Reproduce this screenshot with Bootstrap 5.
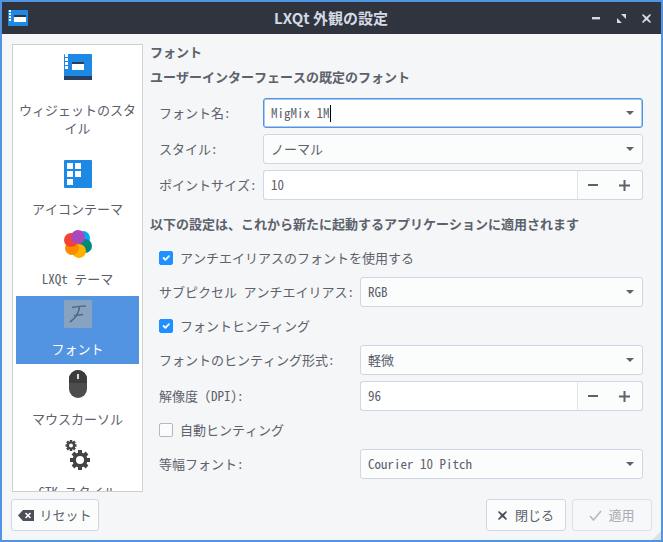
<!DOCTYPE html>
<html lang="ja"><head><meta charset="utf-8"><title>LXQt 外観の設定</title>
<link href="https://cdn.jsdelivr.net/npm/bootstrap@5.3.0/dist/css/bootstrap.min.css" rel="stylesheet">
<style>
html,body{margin:0;height:542px;overflow:hidden}
body{font:13px/18px "Noto Sans Mono CJK JP","Noto Sans CJK JP",monospace;color:#5c616c;background:#f5f6f7}
.win{width:663px;height:542px;border:2px solid #5294e2;background:#f5f6f7;position:relative}
.titlebar{height:32px;background:#2f343f;color:#d3dae3;font:bold 15px/32px "Noto Sans CJK JP",sans-serif;padding:0 10px 0 6px}
.titletext{flex:1;text-align:center;margin-left:42px}
.winbtns{gap:16px}
.appicon{display:block}
.main{padding:10px 10px 0}
.navlist{width:131px;height:448px;border:1px solid #cfd0d2;background:#fff;padding:3px;overflow:hidden;border-radius:0;flex:none}
.navlist .list-group-item{flex:none;border:0;padding:4px 0 0;height:68px;margin:0 0 2px;background:transparent;color:#5c616c;text-align:center;border-radius:0;font-size:13px;line-height:18px}
.navlist .list-group-item svg{display:block;margin:0 auto 12px}
.navlist .list-group-item.tall{height:106px;padding-top:6px;margin-bottom:2px}
.navlist .list-group-item.tall svg{margin-bottom:21px}
.navlist .list-group-item.list-group-item.active{background:#5294e2;color:#fff;margin-top:0}
.pane{width:493px;margin-left:7px}
.hd{font-weight:700;height:18px;margin:-1px 0 0}
.sub{font-weight:700;margin:7px 0 0;height:18px}
.sub2{font-weight:700;margin:15px 0 0;height:18px}
.frow{display:flex;align-items:center;padding-left:9px;margin-top:6px}
.frow .lbl{flex:none;width:104px;white-space:nowrap}
.frow .lbl.wide{width:201px}
.form-select.combo,.form-control.num{height:30px;flex:1;min-width:0;width:auto;font-size:13px;line-height:18px;color:#5c616c;padding:5px 24px 5px 7px;border:1px solid #cfd6e6;border-radius:3px;background-color:#fbfcfc}
.form-select.combo{background-image:url("data:image/svg+xml,%3Csvg xmlns='http://www.w3.org/2000/svg' viewBox='0 0 8 4'%3E%3Cpath d='M0 0h8L4 4z' fill='%235c616c'/%3E%3C/svg%3E");background-size:8px 4px;background-position:right 8px center;box-sizing:border-box}
.combo.focused{border-color:#5294e2;background-color:#fff;box-shadow:inset 0 0 0 .5px #5294e2}
.txtcaret{display:inline-block;width:1px;height:17px;background:#000;vertical-align:-4px}
.spin{flex:1;height:30px;min-width:0;width:auto}
.spin .form-control.num{background:#fff;border-radius:3px 0 0 3px!important;border-right:0;padding:4px 7px 6px}
.spin .btn{height:30px;border:1px solid #cfd6e6;border-left:0;border-radius:0;background:#fbfcfc;color:#5c616c;display:flex;align-items:center;justify-content:center}
.spin .btn.first{width:34px;border-left:1px solid #dfe3ea;padding:0 3px 0 0}
.spin .btn.last{width:33px;border-radius:0 3px 3px 0!important;padding:0 4px 0 0}
.chk{display:flex;align-items:center;padding-left:9px;height:18px;margin:0}
.chk .form-check-input{width:14px;height:14px;margin:0 7px 0 0;flex:none;border-color:#b5b7bb;border-radius:2px;background-color:#fbfcfc}
.chk .form-check-input:checked{background-color:#1e90ff;border-color:#1e90ff}
.footer{padding:7px 10px 0;margin:0 -1px}
.fbtn{height:32px;padding:0;display:flex;align-items:center;justify-content:center;font-size:13px;line-height:18px;color:#5c616c;background:#fbfcfc;border:1px solid #cfd6e6;border-radius:3px}
.fbtn.reset{width:88px;gap:5px}
.fbtn.act{width:80px;gap:8px}
.fbtn.act.apply{gap:6px}
.btngap{gap:6px}
.fbtn:disabled{opacity:1;color:#a9acb2;background:#f7f8f9;border-color:#dde0e5}
.grip{position:absolute;right:0;bottom:0;width:0;height:0;border-left:9px solid transparent;border-bottom:9px solid #dfe0e2}
</style></head><body>
<div class="win">
 <div class="titlebar d-flex align-items-center">
  <svg class="appicon" width="20" height="16" viewBox="0 0 20 16"><rect width="20" height="16" fill="#1e88e5"/><path d="M1 0h2v2H1zM1 3h2v2H1zM1 6h2v2H1zM1 9h2v2H1z" fill="#fff"/><rect x="6" y="5" width="12" height="7" fill="#fff"/><rect x="6" y="5" width="12" height="2" fill="#2f343f"/></svg>
  <div class="titletext">LXQt 外観の設定</div>
  <div class="d-flex align-items-center winbtns">
   <svg width="9" height="9" viewBox="0 0 9 9"><rect y="3" width="8" height="2.4" fill="#d3dae3"/></svg>
   <svg width="9" height="9" viewBox="0 0 9 9"><path d="M4 0h5v5zM0 4l5 5H0z" fill="#d3dae3"/></svg>
   <svg width="9" height="9" viewBox="0 0 9 9"><path d="M1 0l3.500 3 3.500-3 1 1-3 3.500 3 3.500-1 1-3.500-3-3.500 3-1-1 3-3.500-3-3.500z" fill="#d3dae3"/></svg>
  </div>
 </div>
 <div class="main d-flex">
  <div class="navlist list-group">
   <div class="list-group-item tall"><svg width="28" height="26" viewBox="0 0 28 26"><rect width="28" height="26" rx="1" fill="#1e88e5"/><rect y="22" width="28" height="4" fill="#2a3f5f"/><path d="M1 0h3v3H1zM1 4h3v3H1zM1 8h3v3H1zM1 12h3v3H1z" fill="#fff"/><rect x="8" y="8" width="12" height="8" fill="#fff"/><rect x="8" y="8" width="12" height="2" fill="#2a3f5f"/></svg>ウィジェットのスタイル</div>
   <div class="list-group-item"><svg width="28" height="28" viewBox="0 0 28 28"><rect width="28" height="28" rx="1" fill="#1e88e5"/><path d="M3 3h6v6H3zM11 3h6v6h-6zM3 11h6v6H3zM11 11h6v6h-6zM3 19h6v6H3z" fill="#fff"/></svg>アイコンテーマ</div>
   <div class="list-group-item"><svg width="28" height="28" viewBox="0 0 28 28"><circle cx="19" cy="8" r="7" fill="#03a9f4"/><circle cx="21" cy="16" r="7" fill="#00897b"/><circle cx="15" cy="21" r="7" fill="#ffb300"/><circle cx="8" cy="18" r="7" fill="#fb8c00"/><circle cx="7" cy="10" r="7" fill="#f44336"/><circle cx="14" cy="7" r="7" fill="#ab47bc"/></svg>LXQt テーマ</div>
   <div class="list-group-item active"><svg width="28" height="28" viewBox="0 0 28 28"><rect width="28" height="28" rx="1" fill="#88a3bf"/><path d="M8 7.500q7-1.500 14-1.500M15.500 7q-1 9-9.500 15M10 15.500l9-1" fill="none" stroke="#4f6a88" stroke-width="1.700"/></svg>フォント</div>
   <div class="list-group-item"><svg width="18" height="28" viewBox="0 0 18 28"><path d="M9 0a9 9 0 0 1 9 9v10a9 9 0 0 1-18 0V9a9 9 0 0 1 9-9z" fill="#4d4d4d"/><path d="M0 13V9a9 9 0 0 1 18 0v4z" fill="#3c3c3c"/><rect x="8" y="4" width="2" height="5" fill="#ddd"/></svg>マウスカーソル</div>
   <div class="list-group-item"><svg width="26" height="31" viewBox="0 0 26 31"><g fill="#444"><circle cx="15" cy="20" r="7.500"/><g stroke="#444" stroke-width="4"><path d="M15 10v20M5 20h20M8 13l14 14M22 13L8 27"/></g><circle cx="6" cy="5.500" r="4"/><g stroke="#444" stroke-width="2.500"><path d="M6 0v11M.5 5.500h11M2 1.500l8 8M10 1.500l-8 8"/></g></g><circle cx="15" cy="20" r="4" fill="#fff"/><circle cx="6" cy="5.500" r="2" fill="#fff"/></svg>GTK スタイル</div>
  </div>
  <div class="pane">
   <div class="hd">フォント</div>
   <div class="sub">ユーザーインターフェースの既定のフォント</div>
   <div class="frow" style="margin-top:12px"><span class="lbl">フォント名:</span><div class="form-select combo focused">MigMix 1M<span class="txtcaret"></span></div></div>
   <div class="frow"><span class="lbl">スタイル:</span><div class="form-select combo">ノーマル</div></div>
   <div class="frow"><span class="lbl">ポイントサイズ:</span><div class="input-group spin"><input class="form-control num" value="10"><button class="btn first" type="button"><svg width="10" height="2"><rect width="10" height="2" fill="#5c616c"/></svg></button><button class="btn last" type="button"><svg width="11" height="11"><path d="M4.500 0h2v4.500H11v2H6.500V11h-2V6.500H0v-2h4.500z" fill="#5c616c"/></svg></button></div></div>
   <div class="sub2">以下の設定は、これから新たに起動するアプリケーションに適用されます</div>
   <label class="chk" style="margin-top:16px"><input class="form-check-input" type="checkbox" checked>アンチエイリアスのフォントを使用する</label>
   <div class="frow" style="margin-top:10px"><span class="lbl wide">サブピクセル アンチエイリアス:</span><div class="form-select combo">RGB</div></div>
   <label class="chk" style="margin-top:10px"><input class="form-check-input" type="checkbox" checked>フォントヒンティング</label>
   <div class="frow" style="margin-top:10px"><span class="lbl wide">フォントのヒンティング形式:</span><div class="form-select combo">軽微</div></div>
   <div class="frow"><span class="lbl wide">解像度 (DPI):</span><div class="input-group spin"><input class="form-control num" value="96"><button class="btn first" type="button"><svg width="10" height="2"><rect width="10" height="2" fill="#5c616c"/></svg></button><button class="btn last" type="button"><svg width="11" height="11"><path d="M4.500 0h2v4.500H11v2H6.500V11h-2V6.500H0v-2h4.500z" fill="#5c616c"/></svg></button></div></div>
   <label class="chk" style="margin-top:10px"><input class="form-check-input" type="checkbox">自動ヒンティング</label>
   <div class="frow" style="margin-top:10px"><span class="lbl wide">等幅フォント:</span><div class="form-select combo">Courier 10 Pitch</div></div>
  </div>
 </div>
 <div class="footer d-flex justify-content-between align-items-center">
  <button class="btn fbtn reset" type="button"><svg width="16" height="11" viewBox="0 0 16 11"><path d="M5 0h11v11H5L0 5.500z" fill="#4a4f59"/><path d="M7.500 3l5 5M12.500 3l-5 5" stroke="#fff" stroke-width="1.500"/></svg>リセット</button>
  <div class="d-flex btngap">
   <button class="btn fbtn act" type="button"><svg width="9" height="9" viewBox="0 0 9 9"><path d="M1 0l3.500 3 3.500-3 1 1-3 3.500 3 3.500-1 1-3.500-3-3.500 3-1-1 3-3.500-3-3.500z" fill="#4a4f59"/></svg>閉じる</button>
   <button class="btn fbtn act apply" type="button" disabled><svg width="13" height="11" viewBox="0 0 13 11"><path d="M1 6l3.500 4L12 1" fill="none" stroke="#b5b8bd" stroke-width="1.600"/></svg>適用</button>
  </div>
 </div>
 <div class="grip"></div>
</div>
</body></html>
